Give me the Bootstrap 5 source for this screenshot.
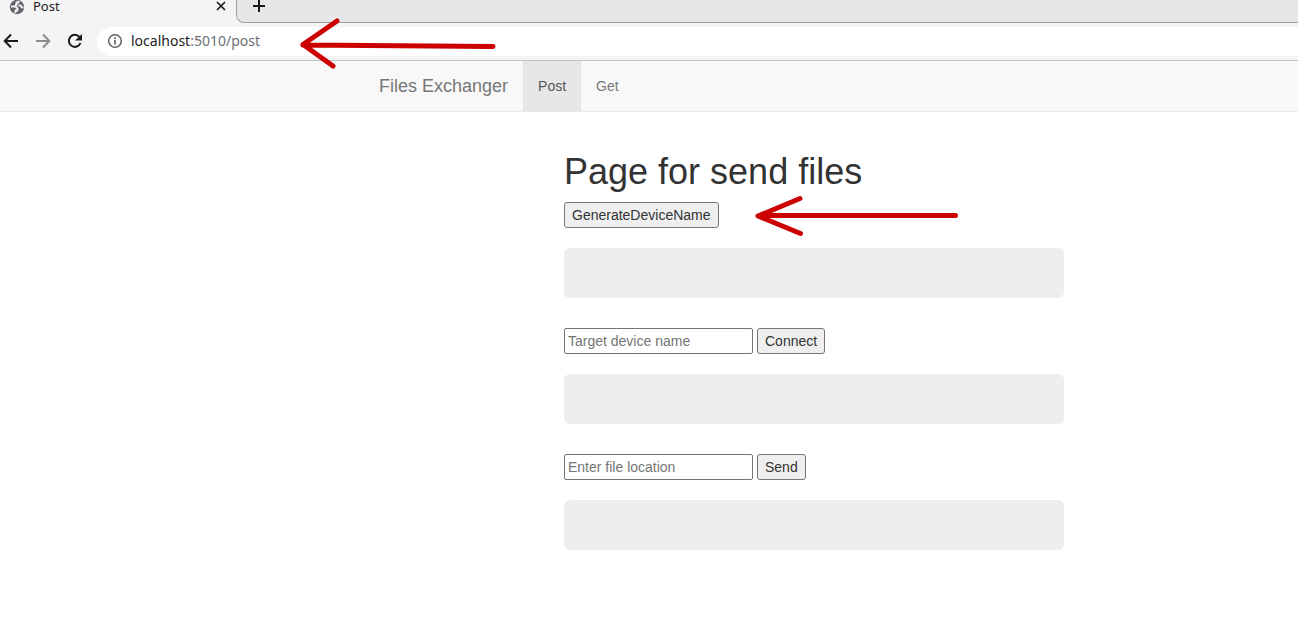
<!DOCTYPE html>
<html lang="en">
<head>
<meta charset="utf-8">
<meta name="viewport" content="width=device-width, initial-scale=1">
<title>Post</title>
<link href="https://cdn.jsdelivr.net/npm/bootstrap@5.3.0/dist/css/bootstrap.min.css" rel="stylesheet">
<style>
body{font-family:"Liberation Sans",Arial,sans-serif;font-size:14px;line-height:20px;color:#333;overflow-x:hidden}
svg{display:block;flex:none}
.browser{background:#f4f4f4;border-bottom:1px solid #c3c3c3;font-family:"Noto Sans","Open Sans",sans-serif}
.tabstrip{height:23px}
.tab-current{width:236px;padding:0 8px 10px 9px;font-size:13px;line-height:13px;color:#222}
.tab-rest{background:#e7e7e7;border:solid #a0a0a0;border-width:0 0 1px 1px;border-bottom-left-radius:8px;padding:0 0 10px 15px}
.icon-btn{border:0;padding:0;background:none;color:#1b1b1b}
.toolbar{height:37px;gap:14px;padding-left:2px}
.toolbar .icon-btn{padding-bottom:2px}
.address{background:#fff;height:29px;border-radius:15px 0 0 15px;padding:0 0 2px 10px;margin-left:-1px;gap:8px}
.address a{color:#6b7075;font-size:14px;line-height:20px}
.address b{color:#222;font-weight:400}
.site-nav{background:#f8f8f8;border-bottom:1px solid #e7e7e7;padding:0 0 0 364px}
.site-nav .navbar-brand{font-size:18px;line-height:20px;padding:15px;margin:0;color:#777}
.site-nav .navbar-nav .nav-link{padding:15px;color:#777}
.site-nav .navbar-nav .nav-link.active{background:#e7e7e7;color:#555}
.page-body{margin-left:564px;max-width:500px;padding-top:40px}
h1{font-size:36px;line-height:40px;margin-bottom:10px}
.plain-btn{background:#efefef;border:1px solid #767676;border-radius:3px;height:26px;padding:0 7px;color:#333}
.plain-input{border:1px solid #767676;border-radius:2px;height:26px;width:189px;padding:0 3px}
.plain-input::placeholder{color:#757575;opacity:1}
.panel-box{background:#eee;border-radius:6px;height:50px;margin:20px 0 30px}
.marks{fill:none;stroke:#c00;stroke-width:5;stroke-linecap:round;stroke-linejoin:round;pointer-events:none}
</style>
</head>
<body class="position-relative bg-white">
<header class="browser">
  <div class="tabstrip d-flex">
    <div class="tab-current d-flex align-items-center">
      <svg width="16" height="16" viewBox="0 0 16 16"><circle cx="8" cy="8" r="7.200" fill="#5f6368"/><path fill="none" stroke="#f4f4f4" stroke-width="2" stroke-linejoin="round" d="M9.500 1.800V3.500H7.500V6H6M2 7.500H6.500L8.500 9.500V11.500H6.500V14M9.500 6.500h2l1.500 2h1.500"/></svg>
      <span class="ms-2 me-auto">Post</span>
      <button class="icon-btn" aria-label="Close tab"><svg width="14" height="14" viewBox="0 0 14 14" stroke="currentColor" stroke-width="1.700"><path d="M3 2l8 8M11 2l-8 8"/></svg></button>
    </div>
    <div class="tab-rest flex-fill d-flex align-items-center">
      <button class="icon-btn" aria-label="New tab"><svg width="14" height="14" viewBox="0 0 14 14" stroke="currentColor" stroke-width="2"><path d="M1 7h12M7 1v12"/></svg></button>
    </div>
  </div>
  <div class="toolbar d-flex align-items-center">
    <button class="icon-btn" aria-label="Back"><svg width="18" height="18" viewBox="0 0 18 18" fill="none" stroke="currentColor" stroke-width="2"><path d="M16 9H3M9 2.500L2.700 9l6.300 6.500"/></svg></button>
    <button class="icon-btn" aria-label="Forward"><svg width="18" height="18" viewBox="0 0 18 18" fill="none" stroke="#8d8d8d" stroke-width="2"><path d="M2 9h13M9 2.500l6.300 6.500L9 15.500"/></svg></button>
    <button class="icon-btn" aria-label="Reload"><svg width="18" height="18" viewBox="0 0 18 18" fill="none" stroke="currentColor" stroke-width="2"><path d="M13.500 5a6 6 0 1 0 1 6"/><path fill="currentColor" stroke="none" d="M16 2v6.500H9z"/></svg></button>
    <div class="address flex-fill d-flex align-items-center">
      <svg width="16" height="16" viewBox="0 0 16 16" fill="none" stroke="#5f6368"><circle cx="8" cy="8" r="6.300" stroke-width="1.500"/><path stroke-width="1.700" d="M8 7v4.500M8 4.300v1.700"/></svg>
      <a class="text-decoration-none" href="#"><b>localhost</b>:5010/post</a>
    </div>
  </div>
</header>
<nav class="site-nav navbar navbar-expand">
  <a class="navbar-brand" href="#">Files Exchanger</a>
  <ul class="navbar-nav">
    <li class="nav-item"><a class="nav-link active" aria-current="page" href="#">Post</a></li>
    <li class="nav-item"><a class="nav-link" href="#">Get</a></li>
  </ul>
</nav>
<main class="page-body">
  <h1 class="fw-normal text-nowrap">Page for send files</h1>
  <div class="d-flex"><button class="plain-btn">GenerateDeviceName</button></div>
  <div class="panel-box"></div>
  <form class="d-flex gap-1">
    <input class="plain-input" type="text" aria-label="Target device name" placeholder="Target device name">
    <button class="plain-btn" type="button">Connect</button>
  </form>
  <div class="panel-box"></div>
  <form class="d-flex gap-1">
    <input class="plain-input" type="text" aria-label="File location" placeholder="Enter file location">
    <button class="plain-btn" type="button">Send</button>
  </form>
  <div class="panel-box"></div>
</main>
<!-- Pointer arrows over the address and the first button -->
<svg class="marks position-absolute top-0 start-0" width="970" height="250" viewBox="0 0 970 250" aria-hidden="true">
  <path d="M493 46.500L303 45M337 21L303 44.500L333 66"/>
  <path d="M955.500 215.500H759M800 198.500L758 216L800.500 233.500"/>
</svg>
<script src="https://cdn.jsdelivr.net/npm/bootstrap@5.3.0/dist/js/bootstrap.bundle.min.js"></script>
</body>
</html>
